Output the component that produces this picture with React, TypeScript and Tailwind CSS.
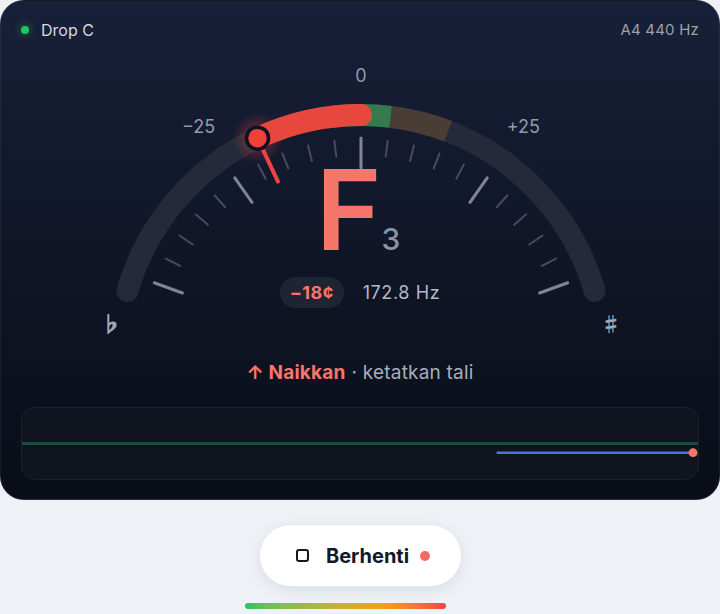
import React from "react";

// gauge geometry (svg coords, svg sits 40px below card top)
const CX = 360;
const CY = 318;
const R = 243;
const DEG_PER_CENT = 1.4;

const polar = (deg: number, r: number) => {
  const a = (deg * Math.PI) / 180;
  return { x: CX + r * Math.sin(a), y: CY - r * Math.cos(a) };
};

const arc = (from: number, to: number, r: number = R) => {
  const s = polar(from, r);
  const e = polar(to, r);
  const large = Math.abs(to - from) > 180 ? 1 : 0;
  return `M ${s.x} ${s.y} A ${r} ${r} 0 ${large} 1 ${e.x} ${e.y}`;
};

const cents = -18;

const Gauge: React.FC = () => {
  const needleDeg = cents * DEG_PER_CENT;
  const tip = polar(needleDeg, R);
  const foot = polar(needleDeg, 195);
  const ticks = [];
  for (let c = -50; c <= 50; c += 5) {
    const major = c % 25 === 0;
    const d = c * DEG_PER_CENT;
    const a = polar(d, major ? 190 : 203);
    const b = polar(d, major ? 220 : 219);
    ticks.push(
      <line
        key={c}
        x1={a.x}
        y1={a.y}
        x2={b.x}
        y2={b.y}
        stroke={major ? "#7f8594" : "#474d5d"}
        strokeWidth={major ? 3 : 2}
        strokeLinecap="round"
      />
    );
  }
  const lbl25 = polar(-25 * DEG_PER_CENT, 283);
  const lbl25r = polar(25 * DEG_PER_CENT, 283);

  return (
    <svg
      width={720}
      height={310}
      viewBox="0 0 720 310"
      className="absolute left-0 top-0"
    >
      <defs>
        <radialGradient id="glow">
          <stop offset="0%" stopColor="#ef4444" stopOpacity="0.5" />
          <stop offset="60%" stopColor="#ef4444" stopOpacity="0.18" />
          <stop offset="100%" stopColor="#ef4444" stopOpacity="0" />
        </radialGradient>
      </defs>
      <path d={arc(-74, 74)} stroke="#242a39" strokeWidth={22} strokeLinecap="round" fill="none" />
      <path d={arc(-21, -7)} stroke="#4a3e34" strokeWidth={22} fill="none" />
      <path d={arc(7, 21)} stroke="#4a3e34" strokeWidth={22} fill="none" />
      <path d={arc(-7, 7)} stroke="#357a4e" strokeWidth={22} fill="none" />
      <circle cx={tip.x} cy={tip.y} r={26} fill="url(#glow)" />
      <path d={arc(needleDeg, 0)} stroke="#e7473c" strokeWidth={22} strokeLinecap="round" fill="none" />
      {ticks}
      <line x1={tip.x} y1={tip.y} x2={foot.x} y2={foot.y} stroke="#ef4444" strokeWidth={4} strokeLinecap="round" />
      <circle cx={tip.x} cy={tip.y} r={11} fill="#ef4136" stroke="#0d1220" strokeWidth={3.5} />

      <g fill="#939aa9" fontSize={18} fontFamily="Inter, sans-serif" textAnchor="middle" dominantBaseline="central">
        <text x={CX} y={35}>0</text>
        <text x={lbl25.x} y={lbl25.y}>−25</text>
        <text x={lbl25r.x} y={lbl25r.y}>+25</text>
      </g>
      <g fill="#a3a9b6" stroke="#a3a9b6" fontSize={20} fontWeight={700} fontFamily="'Noto Sans CJK JP', 'DejaVu Sans', sans-serif" textAnchor="middle" dominantBaseline="central">
        <text x={110} y={283} strokeWidth={1}>♭</text>
        <text x={610} y={283} strokeWidth={0.3}>♯</text>
      </g>
    </svg>
  );
};

const PitchTrace: React.FC = () => (
  <svg width="100%" height="100%" viewBox="0 0 678 73" preserveAspectRatio="none" className="block">
    <line x1={0} y1={36.5} x2={678} y2={36.5} stroke="#1f4a3b" strokeWidth={3} />
    <line x1={476} y1={46} x2={672} y2={46} stroke="#5372e0" strokeWidth={2.5} />
    <circle cx={673} cy={46} r={4.5} fill="#f7766b" />
  </svg>
);

const App: React.FC = () => {
  return (
    <div className="w-[720px] h-[614px] bg-[#eef2f7] font-['Inter',sans-serif] flex flex-col items-center overflow-hidden">
      <div className="w-full h-[500px] rounded-[24px] bg-linear-to-b from-[#182039] to-[#090d17] border border-white/5 flex flex-col">
        <div className="flex items-center justify-between px-[20px] pt-[19px] h-[39px]">
          <div className="flex items-center gap-[12px]">
            <span className="w-[8px] h-[8px] rounded-full bg-[#22c55e] shadow-[0_0_8px_rgba(34,197,94,0.7)]" />
            <span className="text-[16px] leading-[20px] text-[#d3d8e1]">Drop C</span>
          </div>
          <span className="text-[15px] leading-[20px] text-[#9aa1b0] tracking-[0.2px]">A4 440 Hz</span>
        </div>

        <div className="relative flex flex-col items-center pt-[113px]">
          <Gauge />
          <div className="relative flex items-baseline pr-[4px]">
            <span className="text-[112px] leading-[112px] font-semibold text-[#f7766b]">F</span>
            <span className="text-[30px] font-medium text-[#8a93a6]">3</span>
          </div>
          <div className="relative mt-[12px] flex items-center gap-[19px]">
            <span className="h-[31px] px-[10px] rounded-full bg-[#1e2431] flex items-center text-[18px] font-bold tracking-[0.4px] text-[#f7766b]">
              −18¢
            </span>
            <span className="text-[18px] tracking-[0.6px] text-[#b2b9c7]">172.8 Hz</span>
          </div>
        </div>

        <div className="mt-[53px] flex justify-center text-[19px] leading-[24px] tracking-[0.2px]">
          <span className="font-bold text-[#f7766b]">↑ Naikkan</span>
          <span className="ml-[6px] text-[#a6aebd]">· ketatkan tali</span>
        </div>

        <div className="mx-[20px] mt-[22px] h-[73px] rounded-[14px] bg-[#10141f] border border-[#1b2130] overflow-hidden">
          <PitchTrace />
        </div>
      </div>

      <button className="mt-[24px] w-[203px] h-[63px] rounded-full bg-white border border-[#e3e7ee] shadow-[0_4px_14px_rgba(15,23,42,0.08)] flex items-center justify-center pl-[6px]">
        <span className="w-[13px] h-[13px] rounded-[3px] border-2 border-[#111827]" />
        <span className="ml-[17px] text-[20px] font-bold text-[#111827]">Berhenti</span>
        <span className="ml-[11px] w-[10px] h-[10px] rounded-full bg-[#f26b63]" />
      </button>

      <div className="mt-[16px] mr-[30px] w-[201px] h-[6px] rounded-full bg-linear-to-r from-[#22c55e] via-[#f59e0b] via-70% to-[#ef4444]" />
    </div>
  );
};

export default App;
